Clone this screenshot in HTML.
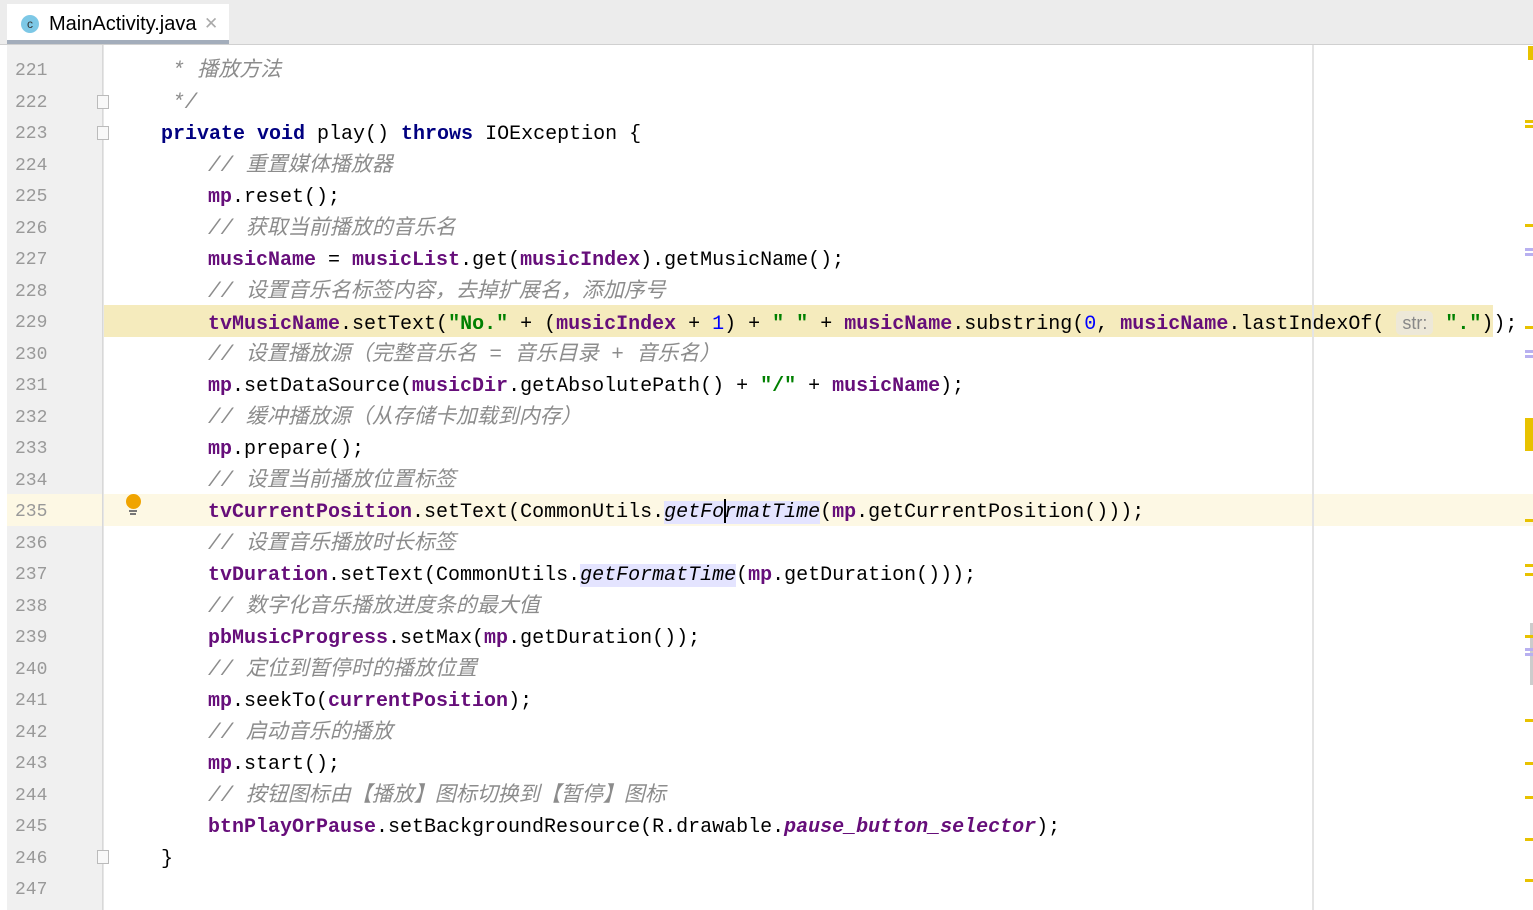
<!DOCTYPE html>
<html><head><meta charset="utf-8"><style>
body{margin:0;width:1533px;height:910px;overflow:hidden;background:#fff;position:relative;font-family:"Liberation Mono","Noto Sans CJK SC",monospace}
.tabbar{position:absolute;left:0;top:0;width:1533px;height:44px;background:#ececec;border-bottom:1px solid #d0d0d0}
.tab{position:absolute;left:7px;top:4px;width:222px;height:36px;background:#fff;border-bottom:4px solid #a3adbb}
.tab .ic{position:absolute;left:14px;top:11px;width:18px;height:18px;border-radius:50%;background:#7dc8e6;color:#333;font:12px "Liberation Sans",sans-serif;text-align:center;line-height:18px}
.tab .t{position:absolute;left:42px;top:9px;font:20px "Liberation Sans",sans-serif;color:#000}
.tab .x{position:absolute;left:197px;top:10px;font:17px "Liberation Sans",sans-serif;color:#aaa}
.gutter{position:absolute;left:7px;top:45px;width:95px;height:865px;background:#f0f0f0;border-right:1px solid #d8d8d8}
.gut2{position:absolute;left:103px;top:45px;width:1px;height:865px;background:#e6e6e6}
.margin{position:absolute;left:1312px;top:45px;width:2px;height:865px;background:#e4e4e4}
.ln{position:absolute;left:15px;width:40px;font-size:18px;color:#999;height:31.5px;line-height:31.5px}
.row{position:absolute;left:0;width:1530px;height:31.5px;line-height:31.5px;font-size:20px;white-space:pre;color:#000}
.c{color:#8c8c8c;font-style:italic;font-size:21px}
.k{color:#000080;font-weight:bold}
.f{color:#660e7a;font-weight:bold}
.s{color:#008000;font-weight:bold}
.n{color:#0000ff}
.i{font-style:italic}
.fi{color:#660e7a;font-weight:bold;font-style:italic}
.hl{background:#e4e4ff}
.hint{background:#ede8d8;color:#888;font-family:"Liberation Sans",sans-serif;font-size:18px;border-radius:5px;padding:2px 6px}
.m{position:absolute;left:1525px;width:8px;height:3px;background:#e8c200}
.p{position:absolute;left:1525px;width:8px;height:3px;background:#b8b0f0}
.w{position:absolute;left:0;top:3px;width:1533px;height:907px}
</style></head><body>
<div class="tabbar"><div class="tab"><div class="ic">c</div><div class="t">MainActivity.java</div><div class="x">✕</div></div></div>
<div style="position:absolute;left:103px;top:305px;width:1390px;height:32px;background:#f5ebbd"></div>
<div style="position:absolute;left:7px;top:494px;width:1526px;height:32px;background:#fdf8e4"></div>
<div class="gutter"></div><div class="gut2"></div>
<div style="position:absolute;left:7px;top:494px;width:95px;height:32px;background:#fdf8e4"></div>
<div class="margin"></div>
<div style="position:absolute;left:124px;top:494px;width:18px;height:22px"><div style="width:15px;height:15px;border-radius:50%;background:#f0a400;margin-left:2px"></div><div style="width:8px;height:2px;background:#777;margin:1px 5px"></div><div style="width:6px;height:2px;background:#777;margin:1px 6px"></div></div>
<div style="position:absolute;left:97px;top:95px;width:12px;height:14px;border:1px solid #bbb;background:#f8f8f8;box-sizing:border-box"></div>
<div style="position:absolute;left:97px;top:126px;width:12px;height:14px;border:1px solid #bbb;background:#f8f8f8;box-sizing:border-box"></div>
<div style="position:absolute;left:97px;top:850px;width:12px;height:14px;border:1px solid #bbb;background:#f8f8f8;box-sizing:border-box"></div>
<div class="w">
<div class="ln" style="top:53px">221</div><div class="ln" style="top:85px">222</div><div class="ln" style="top:116px">223</div><div class="ln" style="top:148px">224</div><div class="ln" style="top:179px">225</div><div class="ln" style="top:211px">226</div><div class="ln" style="top:242px">227</div><div class="ln" style="top:274px">228</div><div class="ln" style="top:305px">229</div><div class="ln" style="top:337px">230</div><div class="ln" style="top:368px">231</div><div class="ln" style="top:400px">232</div><div class="ln" style="top:431px">233</div><div class="ln" style="top:463px">234</div><div class="ln" style="top:494px">235</div><div class="ln" style="top:526px">236</div><div class="ln" style="top:557px">237</div><div class="ln" style="top:589px">238</div><div class="ln" style="top:620px">239</div><div class="ln" style="top:652px">240</div><div class="ln" style="top:683px">241</div><div class="ln" style="top:715px">242</div><div class="ln" style="top:746px">243</div><div class="ln" style="top:778px">244</div><div class="ln" style="top:809px">245</div><div class="ln" style="top:841px">246</div><div class="ln" style="top:872px">247</div>

<div class="row c" style="top:53px;left:172px">* 播放方法</div>
<div class="row c" style="top:85px;left:172px">*/</div>
<div class="row" style="top:116px;left:161px"><span class="k">private void</span> play() <span class="k">throws</span> IOException {</div>
<div class="row c" style="top:148px;left:208px">// 重置媒体播放器</div>
<div class="row" style="top:179px;left:208px"><span class="f">mp</span>.reset();</div>
<div class="row c" style="top:211px;left:208px">// 获取当前播放的音乐名</div>
<div class="row" style="top:242px;left:208px"><span class="f">musicName</span> = <span class="f">musicList</span>.get(<span class="f">musicIndex</span>).getMusicName();</div>
<div class="row c" style="top:274px;left:208px">// 设置音乐名标签内容，去掉扩展名，添加序号</div>
<div class="row" style="top:305px;left:208px"><span class="f">tvMusicName</span>.setText(<span class="s">"No."</span> + (<span class="f">musicIndex</span> + <span class="n">1</span>) + <span class="s">" "</span> + <span class="f">musicName</span>.substring(<span class="n">0</span>, <span class="f">musicName</span>.lastIndexOf( <span class="hint">str:</span> <span class="s">"."</span>));</div>
<div class="row c" style="top:337px;left:208px">// 设置播放源（完整音乐名 = 音乐目录 + 音乐名）</div>
<div class="row" style="top:368px;left:208px"><span class="f">mp</span>.setDataSource(<span class="f">musicDir</span>.getAbsolutePath() + <span class="s">"/"</span> + <span class="f">musicName</span>);</div>
<div class="row c" style="top:400px;left:208px">// 缓冲播放源（从存储卡加载到内存）</div>
<div class="row" style="top:431px;left:208px"><span class="f">mp</span>.prepare();</div>
<div class="row c" style="top:463px;left:208px">// 设置当前播放位置标签</div>
<div class="row" style="top:494px;left:208px"><span class="f">tvCurrentPosition</span>.setText(CommonUtils.<span class="i hl">getFormatTime</span>(<span class="f">mp</span>.getCurrentPosition()));</div>
<div class="row c" style="top:526px;left:208px">// 设置音乐播放时长标签</div>
<div class="row" style="top:557px;left:208px"><span class="f">tvDuration</span>.setText(CommonUtils.<span class="i hl">getFormatTime</span>(<span class="f">mp</span>.getDuration()));</div>
<div class="row c" style="top:589px;left:208px">// 数字化音乐播放进度条的最大值</div>
<div class="row" style="top:620px;left:208px"><span class="f">pbMusicProgress</span>.setMax(<span class="f">mp</span>.getDuration());</div>
<div class="row c" style="top:652px;left:208px">// 定位到暂停时的播放位置</div>
<div class="row" style="top:683px;left:208px"><span class="f">mp</span>.seekTo(<span class="f">currentPosition</span>);</div>
<div class="row c" style="top:715px;left:208px">// 启动音乐的播放</div>
<div class="row" style="top:746px;left:208px"><span class="f">mp</span>.start();</div>
<div class="row c" style="top:778px;left:208px">// 按钮图标由【播放】图标切换到【暂停】图标</div>
<div class="row" style="top:809px;left:208px"><span class="f">btnPlayOrPause</span>.setBackgroundResource(R.drawable.<span class="fi">pause_button_selector</span>);</div>
<div class="row" style="top:841px;left:161px">}</div>
</div>
<div style="position:absolute;left:724px;top:499px;width:2px;height:24px;background:#000;z-index:5"></div>
<div class="m" style="top:46px;left:1528px;width:5px;height:14px"></div>
<div class="m" style="top:120px"></div><div class="m" style="top:125px"></div>
<div class="m" style="top:224px"></div>
<div class="p" style="top:248px"></div><div class="p" style="top:253px"></div>
<div class="m" style="top:326px"></div>
<div class="p" style="top:350px"></div><div class="p" style="top:355px"></div>
<div class="m" style="top:418px;height:33px"></div>
<div class="m" style="top:519px"></div>
<div class="m" style="top:564px"></div><div class="m" style="top:573px"></div>
<div style="position:absolute;left:1530px;top:623px;width:3px;height:62px;background:#ccc"></div>
<div class="m" style="top:635px"></div>
<div class="p" style="top:648px"></div><div class="p" style="top:653px"></div>
<div class="m" style="top:719px"></div><div class="m" style="top:762px"></div><div class="m" style="top:796px"></div><div class="m" style="top:838px"></div><div class="m" style="top:879px"></div>
</body></html>
